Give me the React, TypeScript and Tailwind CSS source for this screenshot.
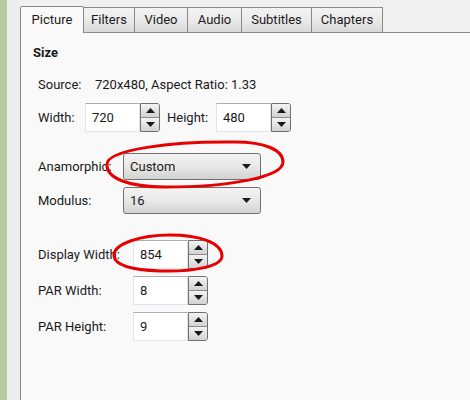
import React from 'react';

const Tri = ({ up }: { up?: boolean }) => (
  <svg width="9" height="5" viewBox="0 0 9 5">
    <polygon points={up ? '0,5 9,5 4.5,0' : '0,0 9,0 4.5,5'} fill="#1a1a1a" />
  </svg>
);

const Spinner = ({ value }: { value: string }) => (
  <div className="flex h-[29px]">
    <div className="w-[55px] h-full bg-white border border-[#dfe3ea] border-t-[#abadb3] flex items-center pl-[6px]">
      {value}
    </div>
    <div className="w-[20px] h-full flex flex-col border border-[#707070] rounded-r-[3px] overflow-hidden">
      <div className="flex-1 flex items-center justify-center bg-gradient-to-b from-[#f4f4f4] to-[#d2d2d2] border-b border-[#8a8a8a]">
        <Tri up />
      </div>
      <div className="flex-1 flex items-center justify-center bg-gradient-to-b from-[#f4f4f4] to-[#d2d2d2]">
        <Tri />
      </div>
    </div>
  </div>
);

const Dropdown = ({ value }: { value: string }) => (
  <div className="w-[138px] h-[27px] flex items-center justify-between pl-[6px] pr-[9px] border border-[#707070] rounded-[3px] bg-gradient-to-b from-[#f3f3f3] via-[#e8e8e8] to-[#d3d3d3]">
    <span>{value}</span>
    <Tri />
  </div>
);

const tabs = [
  { name: 'Filters', w: 'w-[51px]' },
  { name: 'Video', w: 'w-[53px]' },
  { name: 'Audio', w: 'w-[54px]' },
  { name: 'Subtitles', w: 'w-[70px]' },
  { name: 'Chapters', w: 'w-[71px]' },
];

const App: React.FC = () => {
  return (
    <div className="relative w-[470px] h-[400px] flex bg-[#f0f0f0] overflow-hidden text-[13px] text-[#1a1a1a] font-['Roboto',sans-serif]">
      {/* window edge */}
      <div className="w-[7px] h-full bg-[#b7ca9e]" />
      <div className="w-[13px] h-full bg-[#ededed]" />

      <div className="flex-1 flex flex-col">
        {/* Tab strip */}
        <div className="flex items-end h-[32px] pt-[5px]">
          <div className="w-[64px] h-[27px] -mb-px relative z-10 flex items-center justify-center bg-[#f9f9f9] border border-b-0 border-[#898989] rounded-t-[2px]">
            Picture
          </div>
          {tabs.map((t) => (
            <div
              key={t.name}
              className={`${t.w} h-[25px] flex items-center justify-center border border-l-0 border-b-0 border-[#898989] bg-gradient-to-b from-[#f2f2f2] via-[#ebebeb] to-[#d8d8d8]`}
            >
              {t.name}
            </div>
          ))}
        </div>

        {/* Panel */}
        <div className="flex-1 bg-[#f9f9f9] border-l border-t border-[#898989] pl-[12px]">
          <div className="mt-[12px] h-[16px] leading-[16px] font-bold text-[13px]">Size</div>

          <div className="pl-[5px]">
            <div className="mt-[16px] h-[16px] flex items-center">
              <span className="w-[57px]">Source:</span>
              <span>720x480, Aspect Ratio: 1.33</span>
            </div>

            <div className="mt-[10px] flex items-center">
              <span className="w-[47px]">Width:</span>
              <Spinner value="720" />
              <span className="w-[49px] ml-[7px]">Height:</span>
              <Spinner value="480" />
            </div>

            <div className="mt-[21px] flex items-center">
              <span className="w-[85px]">Anamorphic:</span>
              <Dropdown value="Custom" />
            </div>

            <div className="mt-[7px] flex items-center">
              <span className="w-[85px]">Modulus:</span>
              <Dropdown value="16" />
            </div>

            <div className="mt-[26px] flex items-center">
              <span className="w-[95px]">Display Width:</span>
              <Spinner value="854" />
            </div>

            <div className="mt-[7px] flex items-center">
              <span className="w-[95px]">PAR Width:</span>
              <Spinner value="8" />
            </div>

            <div className="mt-[7px] flex items-center">
              <span className="w-[95px]">PAR Height:</span>
              <Spinner value="9" />
            </div>
          </div>
        </div>
      </div>

      {/* hand-drawn annotations */}
      <svg className="absolute inset-0 pointer-events-none" width="470" height="400">
        <path
          d="M107,164 C108,150 170,141 235,142 C265,142 283,150 283,162 C283,177 230,187 165,187 C128,187 106,178 107,164 Z"
          fill="none"
          stroke="#e60000"
          strokeWidth="3"
        />
        <path
          d="M114,256 C113,244 140,235 170,235 C200,235 222,243 222,256 C222,266 195,272 160,271 C132,270 115,265 114,256 Z"
          fill="none"
          stroke="#e60000"
          strokeWidth="3"
        />
      </svg>
    </div>
  );
};

export default App;
